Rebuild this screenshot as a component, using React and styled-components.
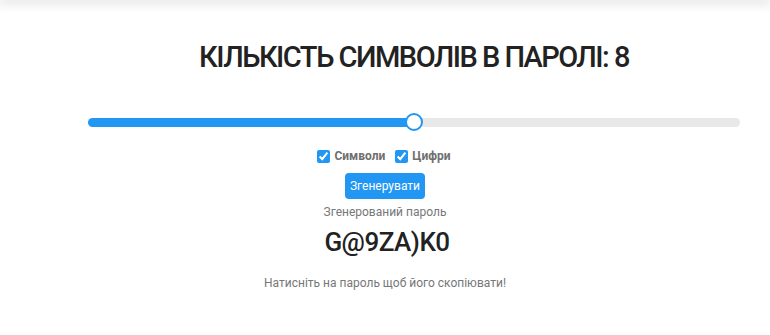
import React, { useState } from 'react'
import styled, { createGlobalStyle } from 'styled-components'

const MIN = 1
const MAX = 15

function makePassword(len) {
  return 'G@9ZA)K0'.slice(0, len)
}

export default function App() {
  const [length, setLength] = useState(8)
  const [symbols, setSymbols] = useState(true)
  const [digits, setDigits] = useState(true)
  const [password, setPassword] = useState(makePassword(8))
  const fill = ((length - MIN) / (MAX - MIN)) * 100

  return (
    <>
      <Global />
      <TopShadow />
      <Page>
        <SliderBlock>
          <Title>КІЛЬКІСТЬ СИМВОЛІВ В ПАРОЛІ: {length}</Title>
          <Range
            type="range"
            min={MIN}
            max={MAX}
            value={length}
            onChange={e => setLength(Number(e.target.value))}
            style={{ '--fill': `${fill}%` }}
          />
        </SliderBlock>

        <Options>
          <Option>
            <input type="checkbox" checked={symbols} onChange={() => setSymbols(!symbols)} />
            Символи
          </Option>
          <Option>
            <input type="checkbox" checked={digits} onChange={() => setDigits(!digits)} />
            Цифри
          </Option>
        </Options>

        <Button onClick={() => setPassword(makePassword(length))}>Згенерувати</Button>
        <Caption>Згенерований пароль</Caption>
        <Password>{password}</Password>
        <Hint>Натисніть на пароль щоб його скопіювати!</Hint>
      </Page>
    </>
  )
}

var Global = createGlobalStyle`
body {
  margin: 0;
  background: #fff;
  font-family: Roboto, "Noto Sans", sans-serif;
}
`

var TopShadow = styled.div`
height: 0;
box-shadow: 0 0 12px 2px rgba(0, 0, 0, 0.24);
`

var Page = styled.div`
display: flex;
flex-direction: column;
align-items: center;
padding-top: 39px;
`

var SliderBlock = styled.div`
align-self: stretch;
margin: 0 30px 0 88px;
display: flex;
flex-direction: column;
align-items: center;
`

var Title = styled.h1`
margin: 0;
font-size: 29px;
font-weight: 500;
color: #222;
letter-spacing: -1.5px;
line-height: 36px;
`

var Range = styled.input`
-webkit-appearance: none;
appearance: none;
width: 100%;
height: 18px;
margin: 38px 0 0;
background: transparent;

&::-webkit-slider-runnable-track {
  height: 9px;
  border-radius: 5px;
  background: linear-gradient(to right, #2196f3 var(--fill), #e8e8e8 var(--fill));
}

&::-webkit-slider-thumb {
  -webkit-appearance: none;
  width: 18px;
  height: 18px;
  margin-top: -4.5px;
  border-radius: 50%;
  background: #fff;
  border: 2.5px solid #2196f3;
  box-sizing: border-box;
}
`

var Options = styled.div`
display: flex;
gap: 10px;
margin-top: 18px;
margin-right: 2px;
`

var Option = styled.label`
display: flex;
align-items: center;
gap: 4px;
font-size: 12px;
font-weight: 700;
color: #6f6f6f;

& > input {
  margin: 0;
  width: 13px;
  height: 13px;
  accent-color: #2196f3;
}
`

var Button = styled.button`
margin-top: 10px;
width: 80px;
height: 26px;
padding: 0;
border: none;
border-radius: 4px;
background: #2196f3;
color: #fff;
font-family: Roboto, sans-serif;
font-size: 12px;
`

var Caption = styled.div`
margin-top: 6px;
font-size: 12px;
color: #777;
`

var Password = styled.div`
margin-top: 8px;
margin-left: 4px;
font-size: 26px;
font-weight: 500;
letter-spacing: -0.5px;
line-height: 31px;
color: #222;
cursor: pointer;
`

var Hint = styled.div`
margin-top: 18px;
font-size: 12px;
color: #777;
`
